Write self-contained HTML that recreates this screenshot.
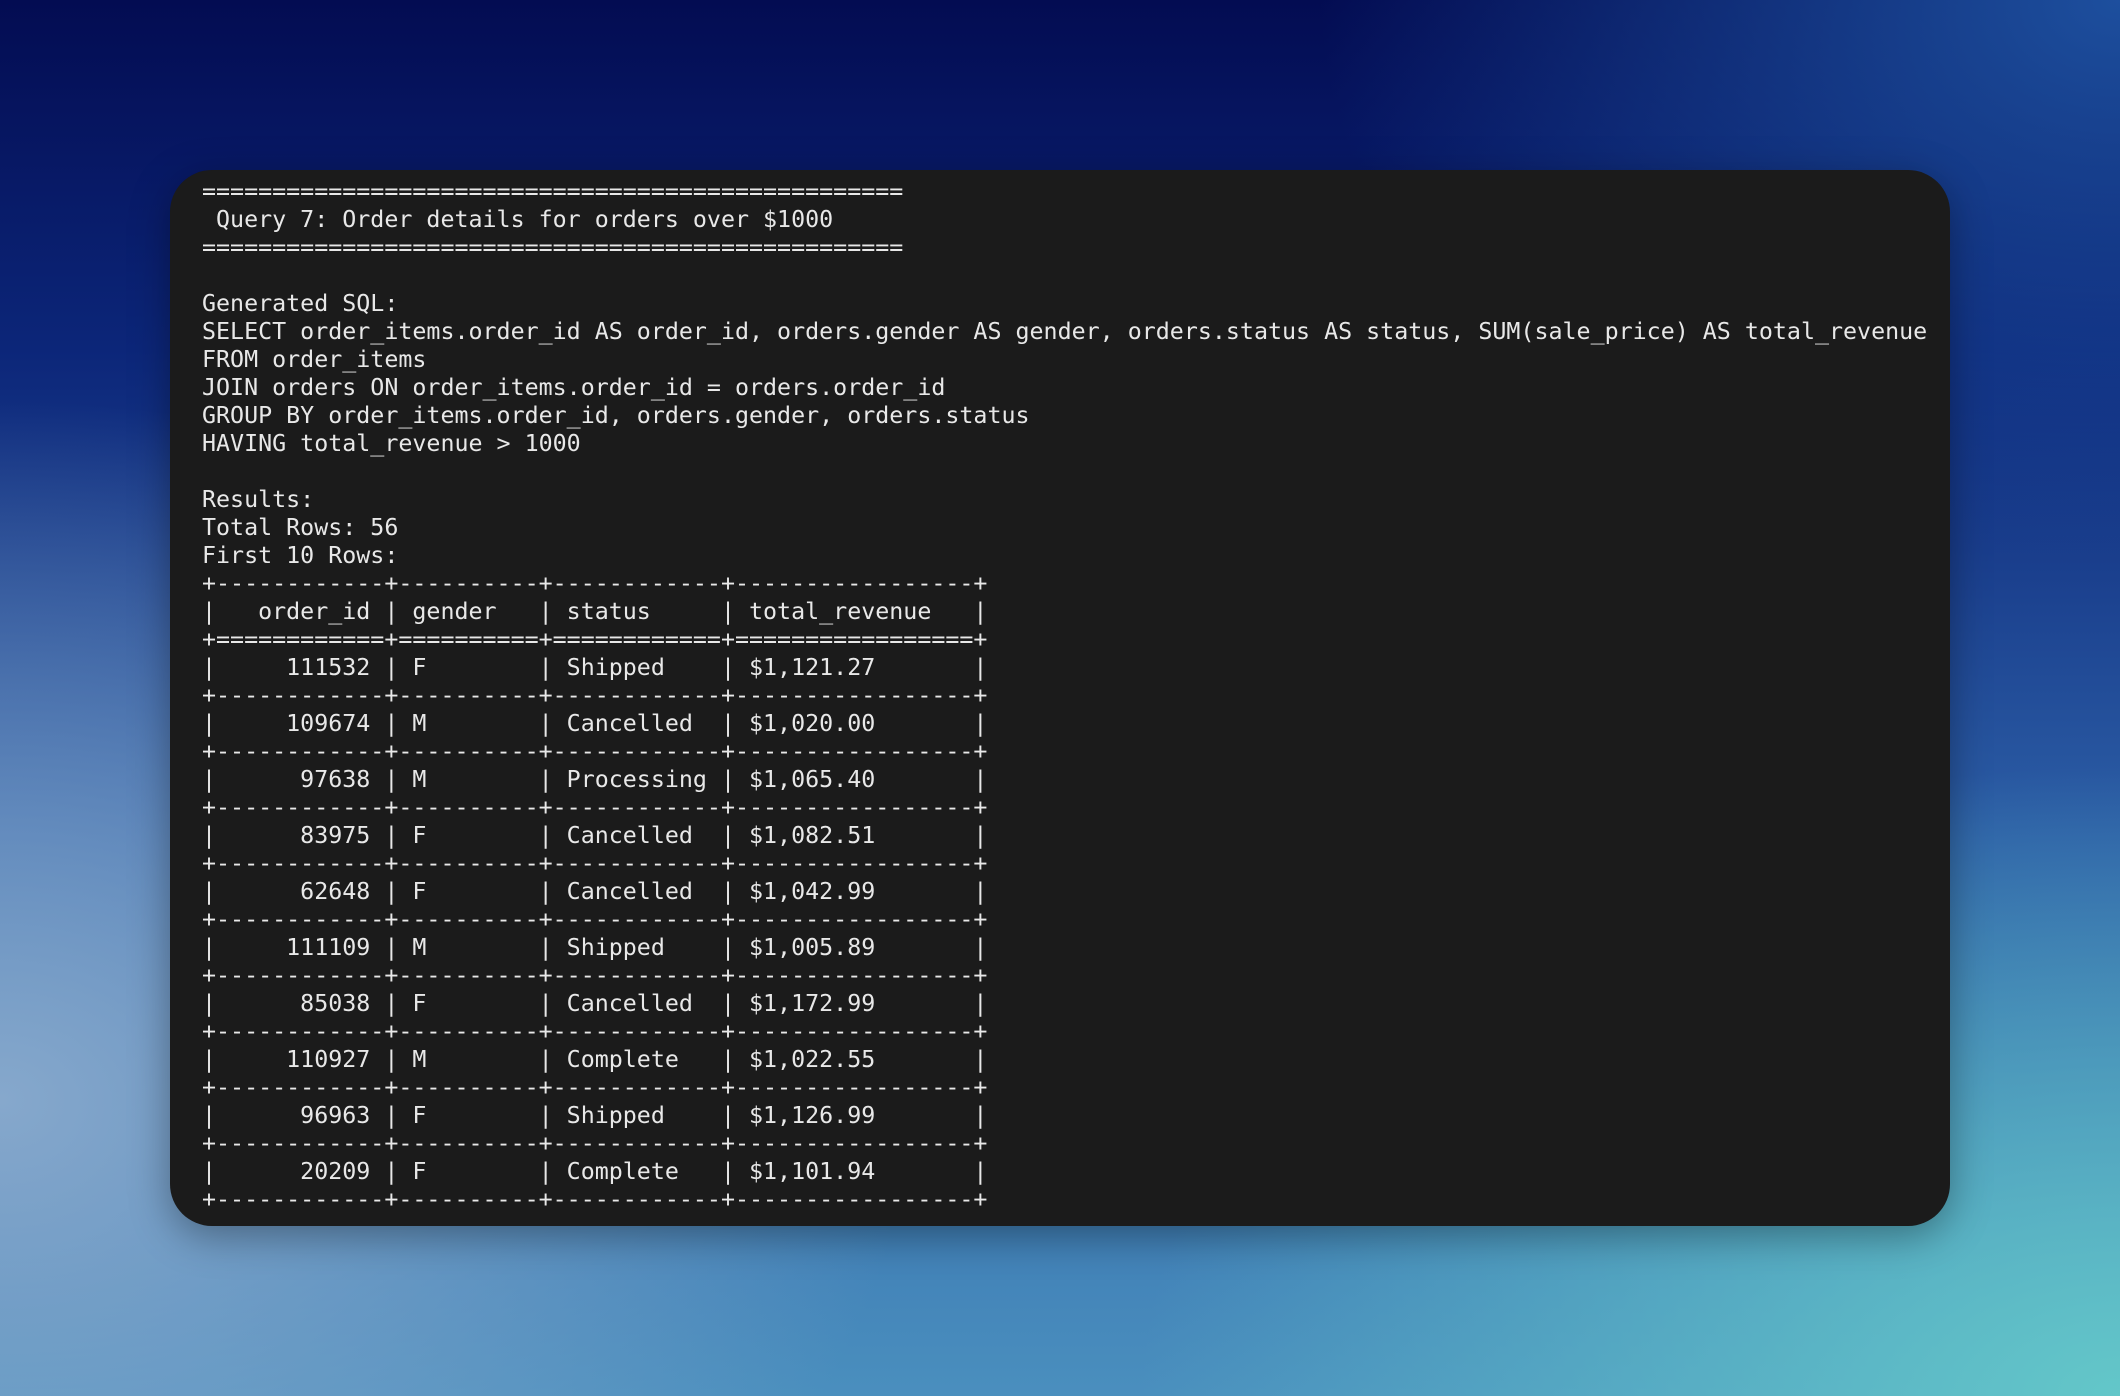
<!DOCTYPE html>
<html><head><meta charset="utf-8"><style>
html,body{margin:0;padding:0;width:2120px;height:1396px;overflow:hidden}
body{background:
radial-gradient(ellipse 1400px 900px at 2120px 1396px,#63c7c9 0%,rgba(99,199,201,0) 70%),
radial-gradient(ellipse 1300px 1000px at 0px 1100px,#86a8cc 0%,rgba(134,168,204,0) 70%),
radial-gradient(ellipse 1000px 700px at 2120px 0px,#1d4f9e 0%,rgba(29,79,158,0) 80%),
linear-gradient(180deg,#030c52 0%,#0c2679 25%,#2c5ea6 60%,#4a8fbe 100%);}
.box{position:absolute;left:170px;top:170px;width:1780px;height:1056px;background:#1b1b1b;border-radius:42px;box-shadow:0 10px 40px rgba(0,0,0,.35)}
pre{position:absolute;left:32px;top:8px;margin:0;font-family:"DejaVu Sans Mono","Liberation Mono",monospace;font-size:23.3px;line-height:28px;color:#e8e8e8}
</style></head><body><div class="box"><pre>==================================================
 Query 7: Order details for orders over $1000
==================================================

Generated SQL:
SELECT order_items.order_id AS order_id, orders.gender AS gender, orders.status AS status, SUM(sale_price) AS total_revenue
FROM order_items
JOIN orders ON order_items.order_id = orders.order_id
GROUP BY order_items.order_id, orders.gender, orders.status
HAVING total_revenue &gt; 1000

Results:
Total Rows: 56
First 10 Rows:
+------------+----------+------------+-----------------+
|   order_id | gender   | status     | total_revenue   |
+============+==========+============+=================+
|     111532 | F        | Shipped    | $1,121.27       |
+------------+----------+------------+-----------------+
|     109674 | M        | Cancelled  | $1,020.00       |
+------------+----------+------------+-----------------+
|      97638 | M        | Processing | $1,065.40       |
+------------+----------+------------+-----------------+
|      83975 | F        | Cancelled  | $1,082.51       |
+------------+----------+------------+-----------------+
|      62648 | F        | Cancelled  | $1,042.99       |
+------------+----------+------------+-----------------+
|     111109 | M        | Shipped    | $1,005.89       |
+------------+----------+------------+-----------------+
|      85038 | F        | Cancelled  | $1,172.99       |
+------------+----------+------------+-----------------+
|     110927 | M        | Complete   | $1,022.55       |
+------------+----------+------------+-----------------+
|      96963 | F        | Shipped    | $1,126.99       |
+------------+----------+------------+-----------------+
|      20209 | F        | Complete   | $1,101.94       |
+------------+----------+------------+-----------------+</pre></div></body></html>
